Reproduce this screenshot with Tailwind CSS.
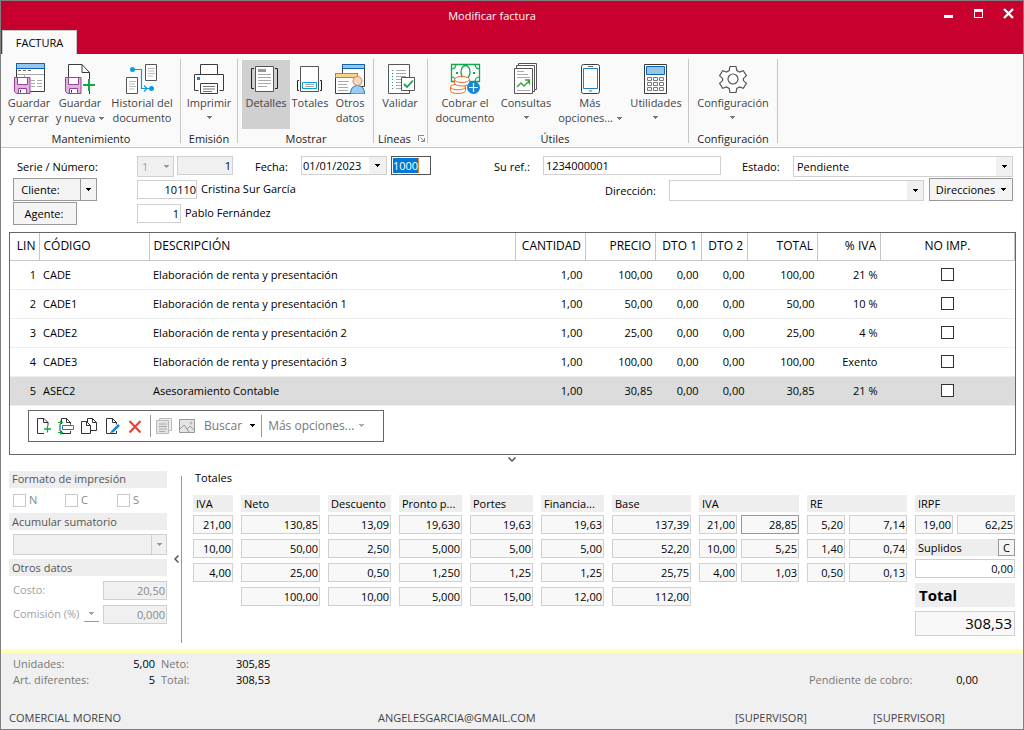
<!DOCTYPE html>
<html lang="es">
<head>
<meta charset="utf-8">
<title>Modificar factura</title>
<script src="https://cdn.jsdelivr.net/npm/@tailwindcss/browser@4"></script>
</head>
<body class="bg-white">
<svg class="hidden" aria-hidden="true">
  <symbol id="arrow" viewBox="0 0 5 3"><path d="M0 0h5v1h-1v1h-1v1h-1v-1h-1v-1h-1z" fill="currentColor"/></symbol>
  <symbol id="floppy" viewBox="0 0 17 17"><path d="M.5 .5h15.500v16H2.500L.5 14.500z" fill="#ddb5dc" stroke="#9b3f9b"/><path d="M3.500 .5h10v7h-10z" fill="#fff" stroke="#9b3f9b"/><path d="M4.500 11.500h8v5h-8z" fill="#fff" stroke="#9b3f9b"/><path d="M6.500 13v2.500" stroke="#333"/></symbol>
</svg>
<div class="flex min-h-screen flex-col border border-[#7f7f7f] bg-white font-['Open_Sans',sans-serif] text-[11px] leading-4 text-black">

  <!-- Title bar -->
  <header class="bg-[#c8002d]">
    <div class="grid h-[29px] grid-cols-[1fr_auto_1fr] items-center">
      <span></span>
      <h1 class="pr-[40px] text-white">Modificar factura</h1>
      <div class="flex justify-end gap-[3px] pb-[6px] pr-px text-white">
        <button aria-label="Minimizar" class="flex h-6 w-[27px] items-center justify-center"><svg class="size-[11px]" viewBox="0 0 11 11"><path d="M1 7h9v3H1z" fill="#fff"/></svg></button>
        <button aria-label="Maximizar" class="flex h-6 w-[27px] items-center justify-center"><svg class="size-[11px]" viewBox="0 0 11 11"><path d="M1 1h9v9H1zM2 4v5h7V4z" fill="#fff" fill-rule="evenodd"/></svg></button>
        <button aria-label="Cerrar" class="flex h-6 w-[27px] items-center justify-center"><svg class="size-[11px]" viewBox="0 0 11 11"><path d="M1 1l9 9M10 1L1 10" stroke="#fff" stroke-width="2.400"/></svg></button>
      </div>
    </div>
    <nav class="flex px-px"><button class="h-6 w-[75px] border border-b-0 border-[#c6c6c6] bg-[#fafafa]">FACTURA</button></nav>
  </header>

  <!-- Ribbon -->
  <section class="flex h-[94px] border-y border-[#c6c6c6] border-t-[#fafafa] bg-[#fafafa] pt-1 pb-1 text-[11px] leading-[15px] text-[#444]">
    <div class="flex flex-col justify-between border-r border-[#c6c6c6] pl-[3px] pr-[2px]">
      <div class="flex pt-px">
        <button class="flex w-[50px] flex-col items-center whitespace-nowrap pt-[2px]">
          <svg class="mb-px size-8" viewBox="13 62 32 32"><path d="M16.500 63.500h28v28h-28z" fill="#fff" stroke="#3c3c3c"/><path d="M16.500 63.500h28v5h-28z" fill="#93c7ef" stroke="#0f64ae"/><path d="M18 70.500h3m2 0h3m2 0h3" stroke="#666"/><path d="M17 74.500h27M24.500 74v17M31 80.500h4m2 0h5m-11 3h4m2 0h5m-11 3h4m2 0h5" stroke="#aaa"/><use href="#floppy" x="14" y="77" width="17" height="17"/></svg>
          <span>Guardar<br>y cerrar</span></button>
        <button class="flex w-[52px] flex-col items-center whitespace-nowrap pt-[2px]">
          <svg class="mb-px size-8" viewBox="64 62 32 32"><path d="M68.500 64.500h14l7 7v22h-21z" fill="#fff"/><path d="M68.500 78V64.500h13.500l7.500 8V79M89.500 91v3M82 64.500v8h7.500" fill="none" stroke="#3c3c3c"/><use href="#floppy" x="65" y="77" width="17" height="17"/><path d="M89 79v12M83 85h12" stroke="#14a64a" stroke-width="2"/></svg>
          <span>Guardar<br>y nueva <svg class="mb-px ml-px inline h-[3px] w-[5px] text-[#777]"><use href="#arrow"/></svg></span></button>
        <button class="flex w-[72px] flex-col items-center whitespace-nowrap pt-[2px]">
          <svg class="mb-px size-8" viewBox="126 62 32 32"><path d="M145.500 64.500h11v16h-11zM126.500 77.500h11v16h-11z" fill="#fff" stroke="#555"/><path d="M148 68.500h7m-7 2.500h6m-6 2.500h7m-7 2.500h5M129 81.500h7m-7 2.500h6m-6 2.500h7m-7 2.500h5" stroke="#bbb"/><path d="M133 69.500h8.500v19h10M144 85.500l3 3-3 3" fill="none" stroke="#0a9be0" stroke-width="1.200"/><circle cx="132.500" cy="69.500" r="2.500" fill="#0a9be0"/><circle cx="151.500" cy="88.500" r="2.500" fill="#0a9be0"/></svg>
          <span>Historial del<br>documento</span></button>
      </div>
      <h2 class="-mb-[3px] text-center text-[#222]">Mantenimiento</h2>
    </div>
    <div class="flex flex-col justify-between border-r border-[#c6c6c6]">
      <div class="flex pt-px">
        <button class="flex w-[56px] flex-col items-center whitespace-nowrap pt-[2px]">
          <svg class="mb-px size-8" viewBox="193 62 32 32"><path d="M200.500 74.500v-10h17v10M198.500 90.500h-4v-16h29v16h-4" fill="#fff" stroke="#3c3c3c"/><path d="M200.500 83.500h17v10h-17z" fill="#fff" stroke="#3c3c3c"/><path d="M203 86.500h12m-12 2.500h12m-12 2.500h9" stroke="#777"/><path d="M197 77h3v3h-3z" fill="#1b85cf"/></svg>
          <span class="flex flex-col items-center">Imprimir<svg class="mt-[6px] h-[3px] w-[5px] text-[#777]"><use href="#arrow"/></svg></span></button>
      </div>
      <h2 class="-mb-[3px] text-center text-[#222]">Emisión</h2>
    </div>
    <div class="flex flex-col justify-between border-r border-[#c6c6c6] pl-1 pr-[3px]">
      <div class="flex pt-px">
        <button aria-pressed="true" class="flex h-[69px] w-12 flex-col items-center whitespace-nowrap bg-[#d0d0d0] pt-[2px]">
          <svg class="mb-px size-8" viewBox="250 62 32 32"><path d="M255.500 66.500h18v25h-18z" fill="#fff" stroke="#555"/><path d="M258 69h8v3h-8z" fill="#999"/><path d="M258 74.500h13m-13 3h13m-13 3h13m-13 3h13m-13 3h9" stroke="#aaa"/><path d="M254 68.500h-2.500v20h2.500M275 68.500h2.500v20H275" fill="none" stroke="#222"/></svg>
          <span>Detalles</span></button>
        <button class="flex w-10 flex-col items-center whitespace-nowrap pt-[2px]">
          <svg class="mb-px size-8" viewBox="294 62 32 32"><path d="M300.500 66.500h18v25h-18z" fill="#fff" stroke="#555"/><path d="M302.500 82.500h14v6h-14z" fill="#fff" stroke="#0a9be0"/><path d="M305 84.500h9m-9 2h9" stroke="#aaa"/><path d="M299 80.500h-1.500v10h1.500M320 80.500h1.500v10H320" fill="none" stroke="#222"/></svg>
          <span>Totales</span></button>
        <button class="flex w-10 flex-col items-center whitespace-nowrap pt-[2px]">
          <svg class="mb-px size-8" viewBox="334 62 32 32"><path d="M342.500 64.500h22v22h-22z" fill="#fff" stroke="#3c3c3c"/><path d="M342.500 64.500h22v4h-22z" fill="#93c7ef" stroke="#0f64ae"/><path d="M335.500 73.500h22v20h-22z" fill="#fff" stroke="#3c3c3c"/><path d="M335.500 73.500h22v4h-22z" fill="#f8d38b" stroke="#d97b16"/><path d="M338 81.500h11m-11 3h9m-9 3h10m-10 3h10" stroke="#aaa"/><path d="M350.500 94c0-5 2.500-8.500 7-8.500s7 3.500 7 8.500z" fill="#9ccaf0" stroke="#1a6fb8"/><circle cx="357.500" cy="81" r="4.500" fill="#f6d9bd" stroke="#c68a58"/></svg>
          <span>Otros<br>datos</span></button>
      </div>
      <h2 class="-mb-[3px] text-center text-[#222]">Mostrar</h2>
    </div>
    <div class="flex flex-col justify-between border-r border-[#c6c6c6] pr-px">
      <div class="flex pt-px">
        <button class="flex w-[52px] flex-col items-center whitespace-nowrap pt-[2px]">
          <svg class="mb-px size-8" viewBox="385 62 32 32"><path d="M389.500 64.500h21v29h-21z" fill="#fff" stroke="#555"/><path d="M397 70.500h10m-10 3h10m-10 3h10m-10 3h7m-7 3h5m-5 3h5m-5 3h5" stroke="#aaa"/><path d="M393 70.500h1m-1 6h1m-1 6h1m-1 6h1" stroke="#14a64a"/><path d="M393 73.500h1m-1 6h1m-1 6h1" stroke="#d33"/><path d="M402.500 77.500h13v13h-13z" fill="#fff" stroke="#555"/><path d="M405 84l3 3 6-6.500" fill="none" stroke="#14a64a" stroke-width="1.800"/></svg>
          <span>Validar</span></button>
      </div>
      <div class="-mb-[3px] flex items-center gap-1 pl-1 text-[#222]"><h2>Líneas</h2><button aria-label="Más opciones de líneas"><svg class="ml-[3px] size-[7px]" viewBox="0 0 7 7"><path d="M.5 6V.5H6M2.500 2.500L6 6M6.500 3v3.500H3" fill="none" stroke="#888"/></svg></button></div>
    </div>
    <div class="flex flex-col justify-between border-r border-[#c6c6c6] pr-[6px]">
      <div class="flex pt-px">
        <button class="flex w-[74px] flex-col items-center whitespace-nowrap pt-[2px]">
          <svg class="mb-px size-8" viewBox="448 62 32 32"><path d="M450.500 64.500h28v17h-28z" fill="#fff" stroke="#14a64a" stroke-width="1.300"/><path d="M450 69q5 0 5-5M474 64q0 5 5 5M450 77q5 0 5 5M474 82q0-5 5-5" fill="none" stroke="#14a64a" stroke-width="1.200"/><ellipse cx="464.500" cy="72" rx="4.500" ry="6.500" fill="none" stroke="#14a64a" stroke-width="1.300"/><path d="M455 72h2v2h-2zM472 72h2v2h-2z" fill="#14a64a"/><g fill="#fff" stroke="#e8702a"><path d="M449.500 87v3.500c0 4 15 4 15 0V87"/><ellipse cx="457" cy="87" rx="7.500" ry="2.800"/><path d="M453.500 79v4c0 4 15 4 15 0v-4"/><ellipse cx="461" cy="79.500" rx="7.500" ry="3"/></g><circle cx="472.500" cy="87.500" r="6.500" fill="#1b85cf"/><path d="M472.500 83v9M468 87.500h9" stroke="#fff" stroke-width="1.200"/></svg>
          <span>Cobrar el<br>documento</span></button>
        <button class="flex w-[48px] flex-col items-center whitespace-nowrap pt-[2px]">
          <svg class="mb-px size-8" viewBox="509 62 32 32"><g fill="#fff" stroke="#555"><path d="M517.500 63.500h18v26h-18z"/><path d="M515.500 65.500h18v26h-18z"/><path d="M513.500 68.500h18v25h-18z"/></g><path d="M516 71.500h7m-7 3h11m-11 3h13m-13 13h13" stroke="#aaa"/><path d="M516 87l4-4 3 3 5-5m-4-1h4.500v4.500" fill="none" stroke="#2fa32f" stroke-width="1.300"/></svg>
          <span class="flex flex-col items-center">Consultas<svg class="mt-[6px] h-[3px] w-[5px] text-[#777]"><use href="#arrow"/></svg></span></button>
        <button class="flex w-[80px] flex-col items-center whitespace-nowrap pt-[2px]">
          <svg class="mb-px size-8" viewBox="574 62 32 32"><rect x="581.500" y="64.500" width="18" height="29" rx="2" fill="#fff" stroke="#3c3c3c"/><path d="M583.500 68.500h14v20h-14z" fill="#fff" stroke="#1b7fd0"/><path d="M588 66.500h5M589 91h3" stroke="#666"/></svg>
          <span>Más<br>opciones... <svg class="mb-px ml-px inline h-[3px] w-[5px] text-[#777]"><use href="#arrow"/></svg></span></button>
        <button class="flex w-[52px] flex-col items-center whitespace-nowrap pt-[2px]">
          <svg class="mb-px size-8" viewBox="639 62 32 32"><path d="M643.500 64.500h22v29h-22z" fill="#fff" stroke="#3c3c3c"/><path d="M645.500 66.500h18v8h-18z" fill="#93c7ef" stroke="#0f64ae"/><path d="M646.500 77.500h4v3h-4zM652.500 77.500h4v3h-4zM658.500 77.500h4v3h-4zM646.500 82.500h4v3h-4zM652.500 82.500h4v3h-4zM658.500 82.500h4v3h-4zM646.500 87.500h4v3h-4zM652.500 87.500h4v3h-4zM658.500 87.500h4v3h-4z" fill="#fff" stroke="#777"/></svg>
          <span class="flex flex-col items-center">Utilidades<svg class="mt-[6px] h-[3px] w-[5px] text-[#777]"><use href="#arrow"/></svg></span></button>
      </div>
      <h2 class="-mb-[3px] text-center text-[#222]">Útiles</h2>
    </div>
    <div class="flex flex-col justify-between border-r border-[#c6c6c6]">
      <div class="flex pt-px">
        <button class="flex w-[88px] flex-col items-center whitespace-nowrap pt-[2px]">
          <svg class="mb-px size-8" viewBox="717 62 32 32"><path d="M730 66.500h6l.8 4 2.700 1.600 3.800-1.400 3.100 5-3 2.700v2.200l3 2.700-3.100 5-3.800-1.400-2.700 1.600-.8 4h-6l-.8-4-2.700-1.600-3.800 1.400-3.100-5 3-2.700v-2.200l-3-2.700 3.100-5 3.800 1.400 2.700-1.600z" fill="#fff" stroke="#555" stroke-width="1.200"/><circle cx="733" cy="79" r="5" fill="none" stroke="#555" stroke-width="1.200"/></svg>
          <span class="flex flex-col items-center">Configuración<svg class="mt-[6px] h-[3px] w-[5px] text-[#777]"><use href="#arrow"/></svg></span></button>
      </div>
      <h2 class="-mb-[3px] text-center text-[#222]">Configuración</h2>
    </div>
  </section>

  <!-- Invoice header -->
  <form class="flex flex-col pt-[6px] pr-[10px]">
    <div class="flex h-6 pt-[2px] pl-4">
      <label for="serie" class="w-[120px] pt-[3px]">Serie / Número:</label>
      <div class="relative h-[21px] w-[37px]">
        <select id="serie" disabled class="size-full appearance-none border border-[#d0d0d0] bg-[#f0f0f0] pl-1 text-[#a0a0a0] opacity-100"><option>1</option></select>
        <svg class="pointer-events-none absolute top-[9px] right-[5px] h-[3px] w-[5px] text-[#999]"><use href="#arrow"/></svg>
      </div>
      <input aria-label="Número" readonly value="1" class="ml-[3px] h-[19px] w-[56px] border border-[#d0d0d0] bg-[#f0f0f0] px-px text-right">
      <label for="fecha" class="ml-[22px] w-[46px] pt-[3px]">Fecha:</label>
      <div class="flex h-[19px] w-[86px] border border-[#d0d0d0]">
        <input id="fecha" value="01/01/2023" class="w-[67px] min-w-0 pl-px">
        <button type="button" aria-label="Abrir calendario" class="flex flex-1 items-center justify-center bg-[#f0f0f0]"><svg class="h-[3px] w-[5px]"><use href="#arrow"/></svg></button>
      </div>
      <div class="ml-1 flex h-[19px] w-10 border border-[#555] p-px"><input aria-label="Hora" value="1000" class="h-[15px] w-[26px] border-r border-[#e08030] bg-[#0078d7] text-white"></div>
      <label for="ref" class="ml-[63px] w-[49px] pt-[3px]">Su ref.:</label>
      <input id="ref" value="1234000001" class="h-[19px] w-[178px] border border-[#d0d0d0] pl-[2px]">
      <label for="estado" class="ml-[21px] w-[51px] pt-[3px]">Estado:</label>
      <div class="relative h-[21px] flex-1">
        <select id="estado" class="size-full appearance-none border border-[#d0d0d0] bg-white pl-[3px]"><option>Pendiente</option></select>
        <span class="pointer-events-none absolute inset-y-px right-px flex w-4 items-center justify-center bg-[#f0f0f0]"><svg class="h-[3px] w-[5px]"><use href="#arrow"/></svg></span>
      </div>
    </div>
    <div class="flex h-6 items-start pl-3">
      <div class="flex h-[23px] w-[84px] border border-[#999] bg-[#f4f4f4]"><button type="button" class="w-[66px] pr-[13px]">Cliente:</button><button type="button" aria-label="Opciones de cliente" class="flex flex-1 items-center justify-center border-l border-[#999]"><svg class="h-[3px] w-[5px]"><use href="#arrow"/></svg></button></div>
      <input aria-label="Código de cliente" value="10110" class="mt-[2px] ml-10 h-[19px] w-[60px] border border-[#d0d0d0] text-right">
      <span class="ml-1 w-[404px] pt-[3px]">Cristina Sur García</span>
      <label for="dir" class="w-16 pt-[5px]">Dirección:</label>
      <div class="relative mt-[2px] h-[21px] flex-1">
        <select id="dir" class="size-full appearance-none border border-[#d0d0d0] bg-white pl-1"><option></option></select>
        <span class="pointer-events-none absolute inset-y-px right-px flex w-4 items-center justify-center bg-[#f0f0f0]"><svg class="h-[3px] w-[5px]"><use href="#arrow"/></svg></span>
      </div>
      <button type="button" class="ml-[5px] flex h-[23px] w-[84px] items-center justify-center gap-[6px] border border-[#999] bg-[#f4f4f4]">Direcciones<svg class="h-[3px] w-[5px]"><use href="#arrow"/></svg></button>
    </div>
    <div class="flex h-6 items-start pl-3">
      <button type="button" class="h-[23px] w-16 border border-[#999] bg-[#f4f4f4] pr-[2px]">Agente:</button>
      <input aria-label="Código de agente" value="1" class="mt-[2px] ml-[60px] h-[19px] w-11 border border-[#d0d0d0] pr-px text-right">
      <span class="ml-1 pt-[3px]">Pablo Fernández</span>
    </div>
  </form>

  <!-- Invoice lines -->
  <section class="mt-[6px] mr-[7px] ml-2 border border-[#666] pb-[12px]">
    <table class="w-full table-fixed border-collapse">
      <thead><tr class="h-[27px] border-b border-[#c6c6c6] *:border-r *:border-[#c6c6c6] *:px-1 *:text-right *:text-[12px] *:font-normal *:whitespace-nowrap">
        <th class="w-[29px] pl-0! pr-[3px]!">LIN</th><th class="w-[110px] text-left!">CÓDIGO</th><th class="text-left!">DESCRIPCIÓN</th><th class="w-[70px]">CANTIDAD</th><th class="w-[70px]">PRECIO</th><th class="w-[46px]">DTO 1</th><th class="w-[46px]">DTO 2</th><th class="w-[70px]">TOTAL</th><th class="w-[63px]">% IVA</th><th class="w-[134px] text-center!">NO IMP.</th>
      </tr></thead>
      <tbody id="lines"></tbody>
    </table>
    <div role="toolbar" aria-label="Líneas de factura" class="mt-1 ml-[18px] flex h-8 w-[356px] items-center border border-[#666] pl-[7px] text-[12px] text-[#777]">
      <button aria-label="Nueva línea" class="mr-1"><svg class="size-[18px]" viewBox="37 417 18 18"><path d="M45 433.500h-6.500v-15h6.500l4 4v3M44.500 418.500v4h4.500" fill="none" stroke="#333"/><path d="M48.500 425.500v7M45 429h7" stroke="#14a64a" stroke-width="1.300"/></svg></button>
      <button aria-label="Insertar línea" class="mr-1"><svg class="size-[18px]" viewBox="59 417 18 18"><path d="M62.500 424v-5.500h5l4 4v2M67.500 418.500v4h4M62.500 431v2.500h9V431" fill="none" stroke="#333"/><path d="M63.500 425.500h11v4h-11z" fill="#fff" stroke="#1b7fd0"/><path d="M61 424v7" stroke="#333"/><path d="M59 422.500h5M59 432.500h5M61.500 420.500v4M61.500 430.500v4" stroke="#14a64a" fill="none"/></svg></button>
      <button aria-label="Duplicar línea" class="mr-[6px]"><svg class="size-[18px]" viewBox="81 417 18 18"><path d="M88.500 418.500h5l4 4v8h-9z" fill="#fff" stroke="#333"/><path d="M93.500 418.500v4h4" fill="none" stroke="#333"/><path d="M82.500 421.500h5l4 4v8h-9z" fill="#fff" stroke="#333"/><path d="M87.500 421.500v4h4" fill="none" stroke="#333"/></svg></button>
      <button aria-label="Editar línea" class="mr-1"><svg class="size-[18px]" viewBox="105 417 18 18"><path d="M117.500 431v2.500h-10v-15h6l4 4v2M113.500 418.500v4h4" fill="none" stroke="#333"/><path d="M113 432l7-7" stroke="#1b85cf" stroke-width="2.500"/><path d="M111.500 433.500l1-2" stroke="#333"/></svg></button>
      <button aria-label="Eliminar línea"><svg class="size-[18px]" viewBox="127 417 18 18"><path d="M130.500 421l11 11.500M141.500 421l-11 11.500" stroke="#ee4035" stroke-width="2.200"/></svg></button>
      <span class="mr-[4px] ml-[6px] h-[22px] border-l border-[#999]"></span>
      <button aria-label="Notas" disabled class="mr-[5px]"><svg class="size-[18px]" viewBox="156 417 18 18"><path d="M160.500 418.500h12v12h-12z" fill="#eee" stroke="#bbb"/><path d="M157.500 420.500h12v13h-12z" fill="#e4e4e4" stroke="#bbb"/><path d="M160 424h8m-8 2.500h8m-8 2.500h8m-8 2.500h6" stroke="#aaa"/></svg></button>
      <button aria-label="Imagen" disabled class="mr-2"><svg class="size-[18px]" viewBox="179 417 18 18"><path d="M180.500 419.500h15v13h-15z" fill="#e4e4e4" stroke="#999"/><path d="M181 429l4-4 5 7M188 429l3-3 5 5" fill="none" stroke="#999"/><circle cx="192" cy="423" r="1.500" fill="#bbb"/></svg></button>
      <button class="flex items-center gap-2">Buscar<svg class="h-[3px] w-[5px] text-black"><use href="#arrow"/></svg></button>
      <span class="mx-[6px] h-[22px] border-l border-[#999]"></span>
      <button class="flex items-center gap-[5px]">Más opciones...<svg class="h-[3px] w-[5px] text-[#aaa]"><use href="#arrow"/></svg></button>
    </div>
  </section>
  <div class="flex h-3 items-start justify-center pt-[2px]"><button aria-label="Ocultar totales"><svg class="h-[5px] w-[8px]" viewBox="0 0 8 5"><path d="M.5 .5L4 4 7.500 .5" fill="none" stroke="#555" stroke-width="1.500"/></svg></button></div>

  <!-- Totals -->
  <section class="flex flex-1 pr-[8px] pl-2">
    <aside class="mt-1 w-[158px] text-[#555]">
      <h2 class="h-[17px] bg-[#eee] pl-[3px] text-[11px] leading-[15px]">Formato de impresión</h2>
      <div class="flex h-[25px] items-center gap-[26px] pl-1 text-[#888]">
        <label class="flex w-[26px] items-center gap-[3px]"><input type="checkbox" disabled class="size-[13px] shrink-0 appearance-none border border-[#c8c8c8] bg-white">N</label>
        <label class="flex w-[26px] items-center gap-[3px]"><input type="checkbox" disabled class="size-[13px] shrink-0 appearance-none border border-[#c8c8c8] bg-white">C</label>
        <label class="flex w-[26px] items-center gap-[3px]"><input type="checkbox" disabled class="size-[13px] shrink-0 appearance-none border border-[#c8c8c8] bg-white">S</label>
      </div>
      <h2 class="h-[17px] bg-[#eee] pl-[3px] leading-[17px]">Acumular sumatorio</h2>
      <div class="relative mt-1 ml-1 h-[21px]">
        <select aria-label="Acumular sumatorio" disabled class="size-full appearance-none border border-[#d0d0d0] bg-[#f0f0f0] opacity-100"><option></option></select>
        <span class="pointer-events-none absolute inset-y-0 right-0 flex w-4 items-center justify-center border border-[#d0d0d0] text-[#999]"><svg class="h-[3px] w-[5px]"><use href="#arrow"/></svg></span>
      </div>
      <h2 class="mt-1 h-[17px] bg-[#eee] pl-[3px] leading-[17px]">Otros datos</h2>
      <div class="mt-[5px] flex h-[19px] items-center justify-between pl-1 text-[#a0a0a0]"><label for="costo">Costo:</label><input id="costo" disabled value="20,50" class="h-full w-16 border border-[#d0d0d0] bg-[#f0f0f0] pr-px text-right text-[#888]"></div>
      <div class="mt-[5px] flex h-[19px] items-center pl-1 text-[#a0a0a0]"><label for="com" class="flex-1">Comisión (%)</label><button aria-label="Tipo de comisión" class="mr-1 flex h-4 w-[15px] items-center justify-center border-b border-[#999]"><svg class="h-[3px] w-[5px]"><use href="#arrow"/></svg></button><input id="com" disabled value="0,000" class="h-full w-16 border border-[#d0d0d0] bg-[#f0f0f0] pr-px text-right text-[#888]"></div>
    </aside>
    <div class="mt-[9px] mb-[6px] flex w-[15px] items-center justify-center border-r border-[#999]"><button aria-label="Ocultar panel"><svg class="ml-1 h-[8px] w-[5px]" viewBox="0 0 5 8"><path d="M4.500 .5L1 4l3.500 3.500" fill="none" stroke="#555" stroke-width="1.500"/></svg></button></div>
    <div class="flex-1 pt-[3px] pl-[11px]">
      <h2 class="pl-[2px]">Totales</h2>
      <div id="totals" class="mt-[9px] grid grid-cols-[40fr_79fr_63fr_63fr_63fr_63fr_79fr_100fr_100fr_100fr] items-start gap-2"></div>
    </div>
  </section>

  <!-- Summary and status -->
  <footer class="border-t-4 border-[#ffffb4] bg-[#f0f0f0] text-[#777]">
    <div class="flex justify-between pt-[3px] pr-[45px] pl-3">
      <dl class="grid grid-cols-[100px_42px_48px_63px] *:h-4">
        <dt>Unidades:</dt><dd class="text-right text-black">5,00</dd><dt class="pl-[6px]">Neto:</dt><dd class="pl-[33px] text-black">305,85</dd>
        <dt>Art. diferentes:</dt><dd class="text-right text-black">5</dd><dt class="pl-[6px]">Total:</dt><dd class="pl-[33px] text-black">308,53</dd>
      </dl>
      <dl class="flex items-end gap-[44px]"><dt>Pendiente de cobro:</dt><dd class="text-black">0,00</dd></dl>
    </div>
    <div class="grid h-[41px] grid-cols-[369fr_357fr_138fr_150fr] items-end pb-[3px] pl-2 text-[#444]"><span>COMERCIAL MORENO</span><span>ANGELESGARCIA@GMAIL.COM</span><span>[SUPERVISOR]</span><span>[SUPERVISOR]</span></div>
  </footer>
</div>
<script>
const lines = [
  ['1', 'CADE', 'Elaboración de renta y presentación', '1,00', '100,00', '0,00', '0,00', '100,00', '21 %'],
  ['2', 'CADE1', 'Elaboración de renta y presentación 1', '1,00', '50,00', '0,00', '0,00', '50,00', '10 %'],
  ['3', 'CADE2', 'Elaboración de renta y presentación 2', '1,00', '25,00', '0,00', '0,00', '25,00', '4 %'],
  ['4', 'CADE3', 'Elaboración de renta y presentación 3', '1,00', '100,00', '0,00', '0,00', '100,00', 'Exento'],
  ['5', 'ASEC2', 'Asesoramiento Contable', '1,00', '30,85', '0,00', '0,00', '30,85', '21 %']
];
document.getElementById('lines').innerHTML = lines.map((r, i) =>
  `<tr class="${i === 4 ? 'h-[29px] border-b border-[#eee] bg-[#dcdcdc]' : 'h-[29px] border-b border-[#eee]'}">` +
  r.map((v, c) => `<td class="${c === 1 || c === 2 ? 'px-1 text-left' : 'px-[3px] text-right'}">${v}</td>`).join('') +
  `<td class="text-center"><input type="checkbox" aria-label="No imprimir línea ${r[0]}" class="block mx-auto size-[13px] appearance-none border border-[#333] bg-white"></td></tr>`).join('');

const head = t => `<h3 class="h-[17px] truncate bg-[#eee] pl-[3px] leading-[17px]">${t}</h3>`;
const box = (v, label, active) => `<input readonly aria-label="${label}" value="${v}" class="${active ? 'h-[19px] w-full min-w-0 border border-[#999] bg-[#f8f8f8] pr-px text-right' : 'h-[19px] w-full min-w-0 border border-[#d0d0d0] bg-[#f8f8f8] pr-px text-right'}">`;
const single = (t, vals) => `<div class="flex min-w-0 flex-col gap-[5px]"><div class="-mb-[2px]">${head(t)}</div>${vals.map(v => box(v, t)).join('')}</div>`;
const pairs = (t, vals) => `<div class="flex min-w-0 flex-col gap-[5px]"><div class="-mb-[2px]">${head(t)}</div>${vals.map(([a, b, active]) => `<div class="grid grid-cols-[38fr_58fr] gap-1">${box(a, t + ' %')}${box(b, t, active)}</div>`).join('')}`;
document.getElementById('totals').innerHTML =
  single('IVA', ['21,00', '10,00', '4,00']) +
  single('Neto', ['130,85', '50,00', '25,00', '100,00']) +
  single('Descuento', ['13,09', '2,50', '0,50', '10,00']) +
  single('Pronto p...', ['19,630', '5,000', '1,250', '5,000']) +
  single('Portes', ['19,63', '5,00', '1,25', '15,00']) +
  single('Financia...', ['19,63', '5,00', '1,25', '12,00']) +
  single('Base', ['137,39', '52,20', '25,75', '112,00']) +
  pairs('IVA', [['21,00', '28,85', true], ['10,00', '5,25'], ['4,00', '1,03']]) + '</div>' +
  pairs('RE', [['5,20', '7,14'], ['1,40', '0,74'], ['0,50', '0,13']]) + '</div>' +
  pairs('IRPF', [['19,00', '62,25']]) +
  `<div class="flex h-[17px] bg-[#eee] pl-[3px] leading-[17px]"><label for="suplidos" class="flex-1">Suplidos</label><button aria-label="Calcular suplidos" class="w-[17px] border border-[#999] bg-[#f4f4f4] leading-[15px]">C</button></div>
   <input id="suplidos" value="0,00" class="-mt-[2px] h-[19px] w-full border border-[#d0d0d0] bg-white pr-px text-right">
   <label for="total" class="block h-6 bg-[#eee] pl-1 text-[15px] leading-6 font-bold">Total</label>
   <input id="total" readonly value="308,53" class="-mt-px h-[25px] w-full border border-[#d0d0d0] bg-[#f8f8f8] pr-[2px] text-right text-[15px]"></div>`;
</script>
</body>
</html>
